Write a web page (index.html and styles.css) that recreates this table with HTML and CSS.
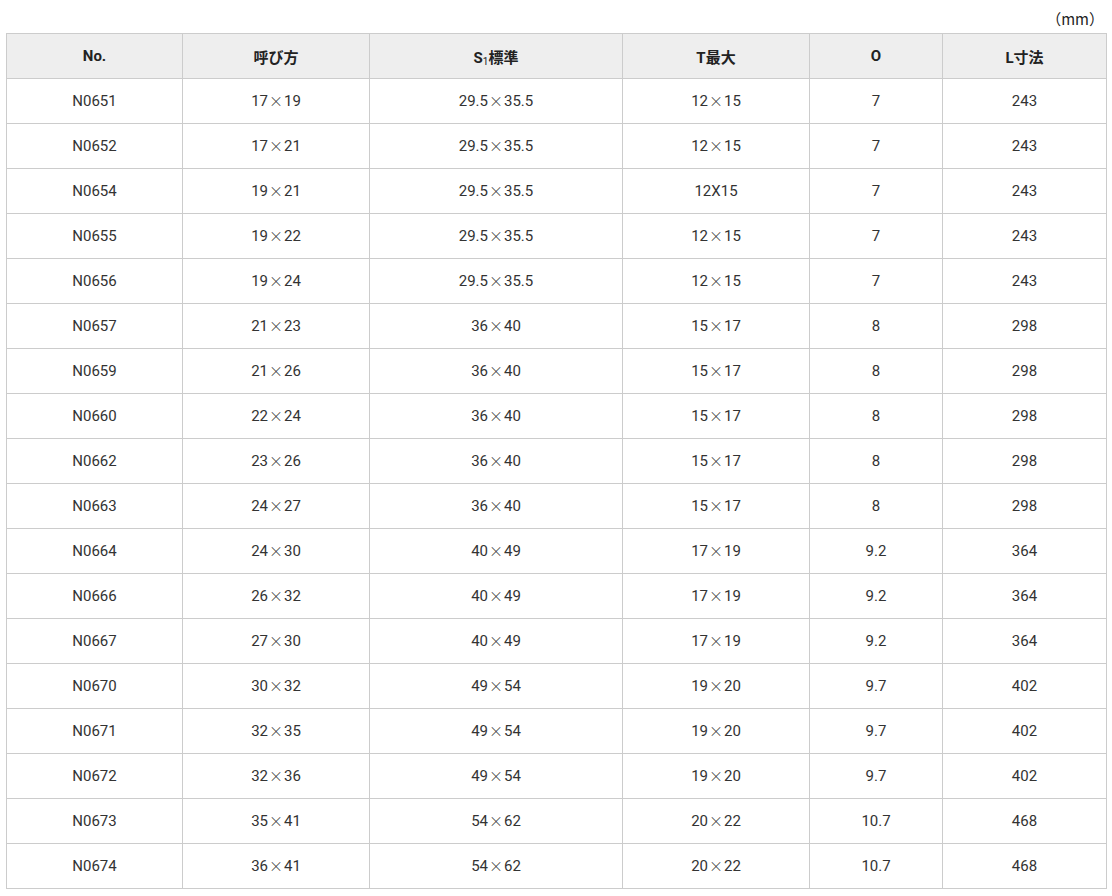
FILE: index.html
```html
<!DOCTYPE html>
<html lang="ja">
<head>
<meta charset="utf-8">
<link rel="stylesheet" href="styles.css">
</head>
<body>
<div class="wrap">
  <p class="unit">（mm）</p>
  <table class="spec">
    <colgroup>
      <col class="c1"><col class="c2"><col class="c3"><col class="c4"><col class="c5"><col class="c6">
    </colgroup>
    <thead>
      <tr><th>No.</th><th>呼び方</th><th>S<sub>1</sub>標準</th><th>T最大</th><th>O</th><th>L寸法</th></tr>
    </thead>
    <tbody>
      <tr><td>N0651</td><td>17<span class="x">×</span>19</td><td>29.5<span class="x">×</span>35.5</td><td>12<span class="x">×</span>15</td><td>7</td><td>243</td></tr>
      <tr><td>N0652</td><td>17<span class="x">×</span>21</td><td>29.5<span class="x">×</span>35.5</td><td>12<span class="x">×</span>15</td><td>7</td><td>243</td></tr>
      <tr><td>N0654</td><td>19<span class="x">×</span>21</td><td>29.5<span class="x">×</span>35.5</td><td>12X15</td><td>7</td><td>243</td></tr>
      <tr><td>N0655</td><td>19<span class="x">×</span>22</td><td>29.5<span class="x">×</span>35.5</td><td>12<span class="x">×</span>15</td><td>7</td><td>243</td></tr>
      <tr><td>N0656</td><td>19<span class="x">×</span>24</td><td>29.5<span class="x">×</span>35.5</td><td>12<span class="x">×</span>15</td><td>7</td><td>243</td></tr>
      <tr><td>N0657</td><td>21<span class="x">×</span>23</td><td>36<span class="x">×</span>40</td><td>15<span class="x">×</span>17</td><td>8</td><td>298</td></tr>
      <tr><td>N0659</td><td>21<span class="x">×</span>26</td><td>36<span class="x">×</span>40</td><td>15<span class="x">×</span>17</td><td>8</td><td>298</td></tr>
      <tr><td>N0660</td><td>22<span class="x">×</span>24</td><td>36<span class="x">×</span>40</td><td>15<span class="x">×</span>17</td><td>8</td><td>298</td></tr>
      <tr><td>N0662</td><td>23<span class="x">×</span>26</td><td>36<span class="x">×</span>40</td><td>15<span class="x">×</span>17</td><td>8</td><td>298</td></tr>
      <tr><td>N0663</td><td>24<span class="x">×</span>27</td><td>36<span class="x">×</span>40</td><td>15<span class="x">×</span>17</td><td>8</td><td>298</td></tr>
      <tr><td>N0664</td><td>24<span class="x">×</span>30</td><td>40<span class="x">×</span>49</td><td>17<span class="x">×</span>19</td><td>9.2</td><td>364</td></tr>
      <tr><td>N0666</td><td>26<span class="x">×</span>32</td><td>40<span class="x">×</span>49</td><td>17<span class="x">×</span>19</td><td>9.2</td><td>364</td></tr>
      <tr><td>N0667</td><td>27<span class="x">×</span>30</td><td>40<span class="x">×</span>49</td><td>17<span class="x">×</span>19</td><td>9.2</td><td>364</td></tr>
      <tr><td>N0670</td><td>30<span class="x">×</span>32</td><td>49<span class="x">×</span>54</td><td>19<span class="x">×</span>20</td><td>9.7</td><td>402</td></tr>
      <tr><td>N0671</td><td>32<span class="x">×</span>35</td><td>49<span class="x">×</span>54</td><td>19<span class="x">×</span>20</td><td>9.7</td><td>402</td></tr>
      <tr><td>N0672</td><td>32<span class="x">×</span>36</td><td>49<span class="x">×</span>54</td><td>19<span class="x">×</span>20</td><td>9.7</td><td>402</td></tr>
      <tr><td>N0673</td><td>35<span class="x">×</span>41</td><td>54<span class="x">×</span>62</td><td>20<span class="x">×</span>22</td><td>10.7</td><td>468</td></tr>
      <tr><td>N0674</td><td>36<span class="x">×</span>41</td><td>54<span class="x">×</span>62</td><td>20<span class="x">×</span>22</td><td>10.7</td><td>468</td></tr>
    </tbody>
  </table>
</div>
</body>
</html>
```
FILE: styles.css
```css
html, body {
  margin: 0;
  padding: 0;
  background: #fff;
}
body {
  font-family: Roboto, "Noto Sans CJK JP", sans-serif;
  color: #333;
  font-size: 15px;
}
.wrap {
  padding: 0 6px;
}
.unit {
  margin: 0;
  height: 33px;
  line-height: 38px;
  text-align: right;
  font-size: 15px;
  padding-right: 2px;
  box-sizing: border-box;
  font-family: "Noto Sans CJK JP", sans-serif;
  color: #222;
}
.spec {
  width: 1100px;
  border-collapse: collapse;
  table-layout: fixed;
}
.c1 { width: 176px; }
.c2 { width: 187px; }
.c3 { width: 253px; }
.c4 { width: 187px; }
.c5 { width: 133px; }
.c6 { width: 164px; }
.spec th, .spec td {
  border: 1px solid #ccc;
  height: 45px;
  padding: 0;
  text-align: center;
  vertical-align: middle;
  box-sizing: border-box;
}
.spec th {
  background: #eee;
  font-weight: bold;
  color: #222;
}
.spec .x {
  font-family: "Noto Sans CJK JP", sans-serif;
  font-size: 14px;
  font-weight: 300;
  line-height: 1;
  padding: 0 1px;
}
.spec sub {
  font-size: 10px;
  vertical-align: -2px;
  font-weight: normal;
}
```
